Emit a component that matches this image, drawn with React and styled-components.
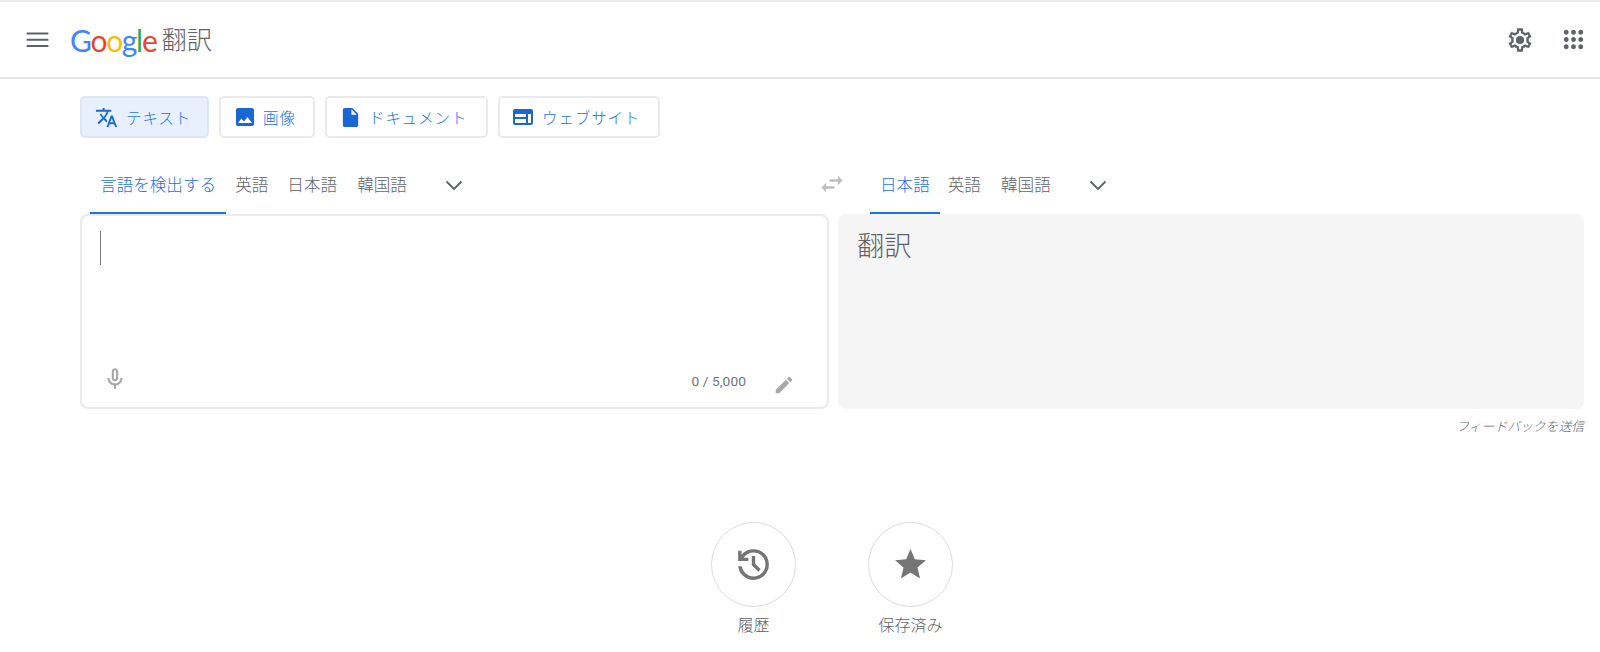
import React from "react";
import styled, { createGlobalStyle } from "styled-components";

const CJK = `"Roboto", "Noto Sans CJK JP", sans-serif`;

const Global = createGlobalStyle`
  html, body { margin: 0; padding: 0; background: #fff; }
  body { font-family: ${CJK}; width: 1600px; height: 652px; overflow: hidden; }
`;

const Page = styled.div`
  display: flex;
  flex-direction: column;
  width: 1600px;
  height: 652px;
  border-top: 2px solid #ebebeb;
  box-sizing: border-box;
`;

const Header = styled.header`
  display: flex;
  align-items: center;
  height: 75px;
  border-bottom: 2px solid #e8e8e8;
  padding: 0 12px 0 23px;
  flex: none;
`;

const Brand = styled.div`
  display: flex;
  align-items: center;
  margin-left: 18px;
  flex: 1;
`;

const Logo = styled.span`
  font-family: "Lato", "Roboto", sans-serif;
  font-size: 30px;
  letter-spacing: -1.3px;
  line-height: 1;
`;

const Letter = styled.span`
  color: ${(p) => p.$c};
`;

const Product = styled.span`
  font-size: 25.3px;
  color: #5f6368;
  margin-left: 5px;
  font-weight: 300;
  line-height: 1;
  position: relative;
  top: 1px;
`;

const HeaderIcons = styled.div`
  display: flex;
  align-items: center;
  gap: 25px;
`;

const Main = styled.main`
  padding: 17px 16px 0 80px;
  display: flex;
  flex-direction: column;
  flex: 1;
`;

const ModeTabs = styled.div`
  display: flex;
  gap: 10px;
`;

const ModeTab = styled.button`
  display: flex;
  align-items: center;
  gap: ${(p) => p.$gap ?? 8}px;
  height: 42px;
  width: ${(p) => p.$w}px;
  box-sizing: border-box;
  padding: 0 0 0 ${(p) => p.$pl}px;
  border: 2px solid ${(p) => (p.$active ? "#dfe6f2" : "#e8eaed")};
  border-radius: 5px;
  background: ${(p) => (p.$active ? "#e8f0fe" : "#fff")};
  color: #1a73e8;
  font-family: ${CJK};
  font-size: 15.5px;
  font-weight: 300;
  letter-spacing: 0.9px;
`;

const LangGrid = styled.div`
  display: grid;
  grid-template-columns: 749px 9px 746px;
  margin-top: 20px;
`;

const LangBar = styled.div`
  display: flex;
  align-items: stretch;
  height: 56px;
  position: relative;
  padding-left: ${(p) => p.$pl}px;
`;

const LangTab = styled.div`
  display: flex;
  align-items: center;
  justify-content: center;
  box-sizing: border-box;
  padding: 0 10px 2px;
  margin-left: ${(p) => p.$ml ?? 0}px;
  font-size: 16.6px;
  font-weight: 300;
  color: ${(p) => (p.$active ? "#1a73e8" : "#5f6368")};
  border-bottom: 2px solid ${(p) => (p.$active ? "#1a73e8" : "transparent")};
  white-space: nowrap;
`;

const Chevron = styled.div`
  display: flex;
  align-items: center;
  margin: 0 0 2px 25px;
`;

const Swap = styled.div`
  position: absolute;
  left: -20px;
  top: 12px;
  width: 28px;
  height: 28px;
`;

const Panels = styled.div`
  display: grid;
  grid-template-columns: 749px 746px;
  gap: 9px;
  height: 195px;
`;

const Source = styled.div`
  box-sizing: border-box;
  border: 2px solid #ebebeb;
  border-radius: 8px;
  display: flex;
  flex-direction: column;
  padding: 15px 32px 11px 18px;
`;

const Caret = styled.div`
  width: 1px;
  height: 34px;
  background: #777;
`;

const SourceFoot = styled.div`
  margin-top: auto;
  display: flex;
  align-items: flex-start;
`;

const MicSlot = styled.div`
  margin: -2px 0 0 2px;
`;

const FootTools = styled.div`
  margin-left: auto;
  margin-top: 6px;
  display: flex;
  align-items: center;
`;

const Count = styled.span`
  font-size: 13.7px;
  color: #70757a;
  margin-right: 27px;
  letter-spacing: 0.1px;
  position: relative;
  top: -4px;
`;

const Target = styled.div`
  background: #f5f5f5;
  border-radius: 8px;
  padding: 16px 19px;
  font-size: 27.3px;
  font-weight: 300;
  line-height: 34px;
  color: #5f6368;
`;

const FeedbackRow = styled.div`
  display: flex;
  justify-content: flex-end;
  margin-top: 10px;
  height: 16px;
`;

const Feedback = styled.span`
  font-size: 12.8px;
  font-style: italic;
  color: #666a6f;
  font-weight: 300;
  line-height: 16px;
`;

const Shortcuts = styled.div`
  display: flex;
  gap: 72px;
  margin-top: 87px;
  padding-left: 631px;
`;

const Shortcut = styled.div`
  display: flex;
  flex-direction: column;
  align-items: center;
  gap: 9px;
  width: 85px;
`;

const Circle = styled.div`
  width: 85px;
  height: 85px;
  box-sizing: border-box;
  border: 1px solid #dadce0;
  border-radius: 50%;
  display: flex;
  align-items: center;
  justify-content: center;
`;

const Label = styled.span`
  font-size: 16px;
  font-weight: 300;
  color: #5f6368;
  line-height: 20px;
  white-space: nowrap;
`;

const M = ({ d, size = 24, fill = "#5f6368" }) => (
  <svg width={size} height={size} viewBox="0 0 24 24" fill={fill} style={{ flex: "none", display: "block" }}>
    <path d={d} />
  </svg>
);

const ChevronIcon = () => (
  <svg width="24" height="24" viewBox="0 0 24 24" fill="none" stroke="#5f6368" strokeWidth="1.9">
    <path d="M4.5 8.5 L12 16 L19.5 8.5" />
  </svg>
);

const P = {
  menu: "M3 18.3h18v-1.7H3zM3 13.1h18v-1.7H3zM3 6.2v1.7h18V6.2z",
  gear: "M19.43 12.98c.04-.32.07-.64.07-.98s-.03-.66-.07-.98l2.11-1.65c.19-.15.24-.42.12-.64l-2-3.46c-.12-.22-.39-.3-.61-.22l-2.49 1c-.52-.4-1.08-.73-1.69-.98l-.38-2.65C14.46 2.18 14.25 2 14 2h-4c-.25 0-.46.18-.49.42l-.38 2.65c-.61.25-1.17.59-1.69.98l-2.49-1c-.23-.09-.49 0-.61.22l-2 3.46c-.13.22-.07.49.12.64l2.11 1.65c-.04.32-.07.65-.07.98s.03.66.07.98l-2.11 1.65c-.19.15-.24.42-.12.64l2 3.46c.12.22.39.3.61.22l2.49-1c.52.4 1.08.73 1.69.98l.38 2.65c.03.24.24.42.49.42h4c.25 0 .46-.18.49-.42l.38-2.65c.61-.25 1.17-.59 1.69-.98l2.49 1c.23.09.49 0 .61-.22l2-3.46c.12-.22.07-.49-.12-.64l-2.11-1.65zM17.45 11.27c.04.31.05.52.05.73 0 .21-.02.43-.05.73l-.14 1.13.89.7 1.08.84-.7 1.21-1.27-.51-1.04-.42-.9.68c-.43.32-.84.56-1.25.73l-1.06.43-.16 1.13-.2 1.35h-1.4l-.19-1.35-.16-1.13-1.06-.43c-.43-.18-.83-.41-1.23-.71l-.91-.7-1.06.43-1.27.51-.7-1.21 1.08-.84.89-.7-.14-1.13c-.03-.31-.05-.54-.05-.74s.02-.43.05-.73l.14-1.13-.89-.7-1.08-.84.7-1.21 1.27.51 1.04.42.9-.68c.43-.32.84-.56 1.25-.73l1.06-.43.16-1.13.2-1.35h1.39l.19 1.35.16 1.13 1.06.43c.43.18.83.41 1.23.71l.91.7 1.06-.43 1.27-.51.7 1.21-1.07.85-.89.7.14 1.13zM12 8.5a3.5 3.5 0 1 0 0 7 3.5 3.5 0 0 0 0-7z",
  apps: "M6 8c1.1 0 2-.9 2-2s-.9-2-2-2-2 .9-2 2 .9 2 2 2zm6 12c1.1 0 2-.9 2-2s-.9-2-2-2-2 .9-2 2 .9 2 2 2zm-6 0c1.1 0 2-.9 2-2s-.9-2-2-2-2 .9-2 2 .9 2 2 2zm0-6c1.1 0 2-.9 2-2s-.9-2-2-2-2 .9-2 2 .9 2 2 2zm6 0c1.1 0 2-.9 2-2s-.9-2-2-2-2 .9-2 2 .9 2 2 2zm4-8c0 1.1.9 2 2 2s2-.9 2-2-.9-2-2-2-2 .9-2 2zm-4 2c1.1 0 2-.9 2-2s-.9-2-2-2-2 .9-2 2 .9 2 2 2zm6 6c1.1 0 2-.9 2-2s-.9-2-2-2-2 .9-2 2 .9 2 2 2zm0 6c1.1 0 2-.9 2-2s-.9-2-2-2-2 .9-2 2 .9 2 2 2z",
  translate: "M12.87 15.07l-2.54-2.51.03-.03c1.74-1.94 2.98-4.17 3.71-6.53H17V4h-7V2H8v2H1v1.99h11.17C11.5 7.92 10.44 9.75 9 11.35 8.07 10.32 7.3 9.19 6.69 8h-2c.73 1.63 1.73 3.17 2.98 4.56l-5.09 5.02L4 19l5-5 3.11 3.11.76-2.04zM18.5 10h-2L12 22h2l1.12-3h4.75L21 22h2l-4.5-12zm-2.62 7l1.62-4.33L19.12 17h-3.24z",
  image: "M21 19V5c0-1.1-.9-2-2-2H5c-1.1 0-2 .9-2 2v14c0 1.1.9 2 2 2h14c1.1 0 2-.9 2-2zM8.5 13.5l2.5 3.01L14.5 12l4.5 6H5l3.5-4.5z",
  doc: "M6 2c-1.1 0-1.99.9-1.99 2L4 20c0 1.1.89 2 1.99 2H18c1.1 0 2-.9 2-2V8l-6-6H6zm7 7V3.5L18.5 9H13z",
  web: "M20 4H4c-1.1 0-2 .9-2 2v12c0 1.1.9 2 2 2h16c1.1 0 2-.9 2-2V6c0-1.1-.9-2-2-2zM4 18v-4h11v4H4zm0-6V9h11v3H4zm13 6V9h3v9h-3z",
  swap: "M6.99 11L3 15l3.99 4v-3H14v-2H6.99v-3zM21 9l-3.99-4v3H10v2h7.01v3L21 9z",
  mic: "M12 14c1.66 0 3-1.34 3-3V5c0-1.66-1.34-3-3-3S9 3.34 9 5v6c0 1.66 1.34 3 3 3zm-1-9c0-.55.45-1 1-1s1 .45 1 1v6c0 .55-.45 1-1 1s-1-.45-1-1V5zm6 6c0 2.76-2.24 5-5 5s-5-2.24-5-5H5c0 3.53 2.61 6.43 6 6.92V21h2v-3.08c3.39-.49 6-3.39 6-6.92h-2z",
  pen: "M3 17.25V21h3.75L17.81 9.94l-3.75-3.75L3 17.25zM20.71 7.04c.39-.39.39-1.02 0-1.41l-2.34-2.34c-.39-.39-1.02-.39-1.41 0l-1.83 1.83 3.75 3.75 1.83-1.83z",
  history: "M12 21q-3.45 0-6.012-2.288T3.05 13H5.1q.35 2.6 2.313 4.3T12 19q2.925 0 4.963-2.037T19 12t-2.037-4.963T12 5q-1.725 0-3.225.8T6.25 8H9v2H3V4h2v2.35q1.275-1.6 3.113-2.475T12 3q3.75 0 6.375 2.625T21 12t-2.625 6.375T12 21m2.8-4.8L11 12.4V7h2v4.6l3.2 3.2z",
  star: "M12 17.27L18.18 21l-1.64-7.03L22 9.24l-7.19-.61L12 2 9.19 8.63 2 9.24l5.46 4.73L5.82 21z",
};

const BLUE = "#1967d2";

export default function App() {
  return (
    <Page>
      <Global />
      <Header>
        <M d={P.menu} size={29} />
        <Brand>
          <Logo>
            <Letter $c="#4285f4">G</Letter>
            <Letter $c="#ea4335">o</Letter>
            <Letter $c="#fbbc05">o</Letter>
            <Letter $c="#4285f4">g</Letter>
            <Letter $c="#34a853">l</Letter>
            <Letter $c="#ea4335">e</Letter>
          </Logo>
          <Product>翻訳</Product>
        </Brand>
        <HeaderIcons>
          <M d={P.gear} size={28} />
          <M d={P.apps} size={29} />
        </HeaderIcons>
      </Header>
      <Main>
        <ModeTabs>
          <ModeTab $active $w={129} $pl={13}>
            <M d={P.translate} size={23} fill={BLUE} />
            テキスト
          </ModeTab>
          <ModeTab $w={96} $pl={12} $gap={6}>
            <M d={P.image} size={24} fill={BLUE} />
            画像
          </ModeTab>
          <ModeTab $w={163} $pl={12} $gap={7}>
            <M d={P.doc} size={23} fill={BLUE} />
            ドキュメント
          </ModeTab>
          <ModeTab $w={162} $pl={11} $gap={7}>
            <M d={P.web} size={24} fill={BLUE} />
            ウェブサイト
          </ModeTab>
        </ModeTabs>
        <LangGrid>
          <LangBar $pl={10}>
            <LangTab $active>言語を検出する</LangTab>
            <LangTab $ml={-1}>英語</LangTab>
            <LangTab $ml={-1}>日本語</LangTab>
            <LangTab>韓国語</LangTab>
            <Chevron><ChevronIcon /></Chevron>
          </LangBar>
          <div />
          <LangBar $pl={32}>
            <Swap><M d={P.swap} size={28} fill="#bdbdbd" /></Swap>
            <LangTab $active>日本語</LangTab>
            <LangTab $ml={-2}>英語</LangTab>
            <LangTab>韓国語</LangTab>
            <Chevron><ChevronIcon /></Chevron>
          </LangBar>
        </LangGrid>
        <Panels>
          <Source>
            <Caret />
            <SourceFoot>
              <MicSlot><M d={P.mic} size={26} fill="#a8a8a8" /></MicSlot>
              <FootTools>
                <Count>0 / 5,000</Count>
                <M d={P.pen} size={22} fill="#a8a8a8" />
              </FootTools>
            </SourceFoot>
          </Source>
          <Target>翻訳</Target>
        </Panels>
        <FeedbackRow>
          <Feedback>フィードバックを送信</Feedback>
        </FeedbackRow>
        <Shortcuts>
          <Shortcut>
            <Circle><M d={P.history} size={41} fill="#757575" /></Circle>
            <Label>履歴</Label>
          </Shortcut>
          <Shortcut>
            <Circle><M d={P.star} size={37} fill="#757575" /></Circle>
            <Label>保存済み</Label>
          </Shortcut>
        </Shortcuts>
      </Main>
    </Page>
  );
}
